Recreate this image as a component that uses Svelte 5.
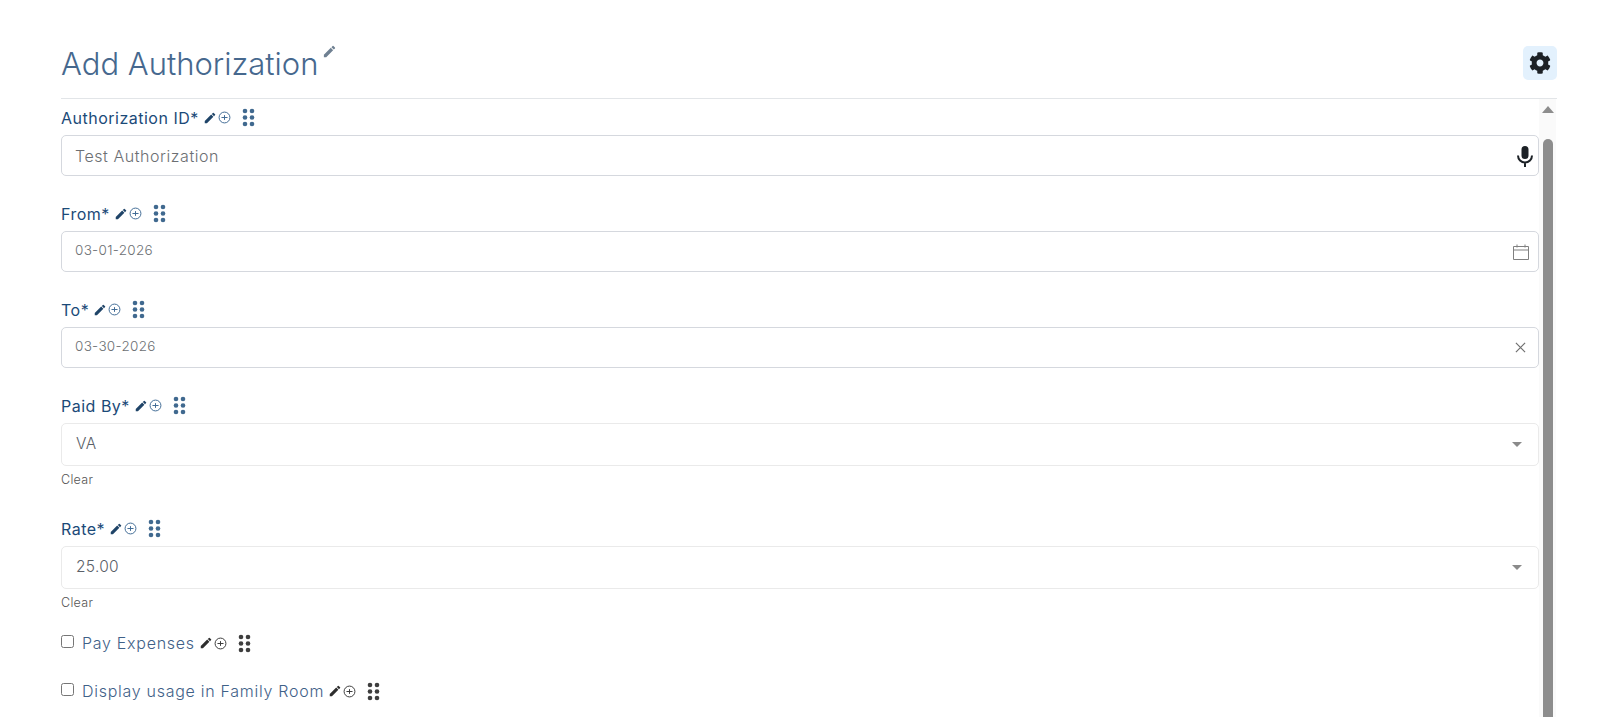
<script>
  const fields = [
    { label: 'Authorization ID*', value: 'Test Authorization', kind: 'text', icon: 'mic' },
    { label: 'From*', value: '03-01-2026', kind: 'date', icon: 'calendar' },
    { label: 'To*', value: '03-30-2026', kind: 'date', icon: 'close' },
    { label: 'Paid By*', value: 'VA', kind: 'select' },
    { label: 'Rate*', value: '25.00', kind: 'select' }
  ];
  const checks = ['Pay Expenses', 'Display usage in Family Room'];
</script>

{#snippet tools()}
  <svg class="pencil" viewBox="0 0 24 24"><path d="M3 17.25V21h3.75L17.81 9.94l-3.75-3.75L3 17.25zM20.71 7.04a1 1 0 0 0 0-1.41l-2.34-2.34a1 1 0 0 0-1.41 0l-1.83 1.83 3.75 3.75 1.83-1.83z" /></svg>
  <svg class="plus" viewBox="0 0 12 12"><circle cx="6" cy="6" r="5" /><path d="M3.2 6h5.6M6 3.8v4.4" /></svg>
  <svg class="grip" viewBox="0 0 13 19"><circle cx="3" cy="3" r="2.3" /><circle cx="10" cy="3" r="2.3" /><circle cx="3" cy="9.5" r="2.3" /><circle cx="10" cy="9.5" r="2.3" /><circle cx="3" cy="16" r="2.3" /><circle cx="10" cy="16" r="2.3" /></svg>
{/snippet}

<div class="page">
  <header class="head">
    <h1>Add Authorization</h1>
    <svg class="title-pencil" viewBox="0 0 24 24"><path d="M3 17.25V21h3.75L17.81 9.94l-3.75-3.75L3 17.25zM20.71 7.04a1 1 0 0 0 0-1.41l-2.34-2.34a1 1 0 0 0-1.41 0l-1.83 1.83 3.75 3.75 1.83-1.83z" /></svg>
    <button class="gear" type="button" aria-label="Settings">
      <svg viewBox="0 0 512 512"><path d="M487.4 315.7l-42.6-24.6c4.3-23.2 4.3-47 0-70.2l42.6-24.6c4.9-2.8 7.1-8.6 5.5-14-11.1-35.6-30-67.8-54.7-94.6-3.8-4.1-10-5.1-14.8-2.3L380.8 110c-17.9-15.4-38.5-27.3-60.8-35.1V25.8c0-5.6-3.9-10.5-9.4-11.7-36.7-8.2-74.3-7.8-109.2 0-5.5 1.2-9.4 6.1-9.4 11.7V75c-22.2 7.9-42.8 19.8-60.8 35.1L88.7 85.5c-4.9-2.8-11-1.9-14.8 2.3-24.7 26.7-43.6 58.9-54.7 94.6-1.7 5.4.6 11.2 5.5 14L67.3 221c-4.3 23.2-4.3 47 0 70.2l-42.6 24.6c-4.9 2.8-7.1 8.6-5.5 14 11.1 35.6 30 67.8 54.7 94.6 3.8 4.1 10 5.1 14.8 2.3l42.6-24.6c17.9 15.4 38.5 27.3 60.8 35.1v49.2c0 5.6 3.9 10.5 9.4 11.7 36.7 8.2 74.3 7.8 109.2 0 5.5-1.2 9.4-6.1 9.4-11.7v-49.2c22.2-7.9 42.8-19.8 60.8-35.1l42.6 24.6c4.9 2.8 11 1.9 14.8-2.3 24.7-26.7 43.6-58.9 54.7-94.6 1.5-5.5-.7-11.3-5.6-14.1zM256 336c-44.1 0-80-35.9-80-80s35.9-80 80-80 80 35.9 80 80-35.9 80-80 80z" /></svg>
    </button>
  </header>

  <div class="body">
    <form class="form">
      {#each fields as f}
        <div class="field" class:sel={f.kind === 'select'}>
          <div class="label"><span>{f.label}</span>{@render tools()}</div>
          <div class="control {f.kind}">
            <span class="value">{f.value}</span>
            {#if f.icon === 'mic'}
              <svg class="mic" viewBox="0 0 24 24"><path d="M12 15a3.5 3.5 0 0 0 3.5-3.5v-6a3.5 3.5 0 0 0-7 0v6A3.5 3.5 0 0 0 12 15z" /><path class="line" d="M5 11.5a7 7 0 0 0 14 0M12 18.5V23" /></svg>
            {:else if f.icon === 'calendar'}
              <svg class="cal" viewBox="0 0 16 16"><path d="M.5 2.5h15v13H.5zM.5 6h15M4 .5v3M12 .5v3" /></svg>
            {:else if f.icon === 'close'}
              <svg class="x" viewBox="0 0 12 12"><path d="M1 1l10 10M11 1 1 11" /></svg>
            {:else if f.kind === 'select'}
              <span class="caret"></span>
            {/if}
          </div>
          {#if f.kind === 'select'}<div class="clear">Clear</div>{/if}
        </div>
      {/each}

      {#each checks as c}
        <div class="check">
          <span class="box"></span>
          <span class="check-label">{c}</span>
          {@render tools()}
        </div>
      {/each}
    </form>

    <div class="scrollbar">
      <span class="up"></span>
      <span class="thumb"></span>
    </div>
  </div>
</div>

<style>
  :global(body) {
    margin: 0;
    background: #fff;
    overflow: hidden;
  }
  .page {
    height: 717px;
    overflow: hidden;
    box-sizing: border-box;
    padding: 46px 43px 0 61px;
    font-family: "Inter", "Noto Sans", sans-serif;
  }
  .head {
    display: flex;
    align-items: flex-start;
    height: 52px;
    border-bottom: 1px solid #e2e5e8;
  }
  h1 {
    margin: 0;
    font-size: 31px;
    line-height: 36px;
    font-weight: 300;
    color: #46688e;
  }
  .title-pencil {
    width: 15px;
    height: 15px;
    margin: -2px 0 0 4px;
    fill: #6f8092;
  }
  .gear {
    margin-left: auto;
    width: 34px;
    height: 34px;
    padding: 0;
    border: 0;
    border-radius: 5px;
    background: #e3f1fd;
    display: flex;
    align-items: center;
    justify-content: center;
  }
  .gear svg {
    width: 22px;
    height: 22px;
    fill: #1c2126;
  }
  .body {
    display: flex;
  }
  .form {
    width: 1478px;
    flex: none;
  }
  .field {
    height: 96px;
    padding-top: 7px;
    box-sizing: border-box;
  }
  .field.sel {
    height: 123px;
  }
  .label {
    display: flex;
    align-items: center;
    height: 23px;
    margin-bottom: 6px;
    font-size: 16px;
    letter-spacing: 0.5px;
    color: #1b4a78;
  }
  .pencil {
    width: 14px;
    height: 14px;
    margin-left: 4px;
    fill: #1f4468;
    flex: none;
  }
  .plus {
    width: 13px;
    height: 13px;
    margin-left: 1px;
    fill: none;
    stroke: #3f6a94;
    stroke-width: 0.9;
    flex: none;
  }
  .grip {
    width: 13px;
    height: 19px;
    margin-left: 11px;
    fill: #40698f;
    flex: none;
  }
  .control {
    height: 41px;
    box-sizing: border-box;
    border: 1px solid #d5d8de;
    border-radius: 5px;
    display: flex;
    align-items: center;
    justify-content: space-between;
    padding: 0 5px 0 13px;
    color: #6c6f73;
    font-weight: 300;
  }
  .control.text .value {
    font-size: 16px;
    letter-spacing: 0.55px;
  }
  .control.date .value {
    font-size: 13.5px;
    letter-spacing: 0.3px;
    padding-bottom: 4px;
  }
  .control.select {
    height: 43px;
    border-color: #eaeaea;
    padding: 0 16px 0 14px;
  }
  .control.select .value {
    font-size: 15.5px;
    letter-spacing: 0.3px;
    color: #5a6068;
    padding-bottom: 3px;
  }
  .mic {
    width: 24px;
    height: 24px;
    margin-right: -4px;
    fill: #1c2126;
  }
  .mic .line {
    fill: none;
    stroke: #1c2126;
    stroke-width: 2;
  }
  .cal {
    width: 16px;
    height: 16px;
    margin-right: 4px;
    fill: none;
    stroke: #808080;
  }
  .x {
    width: 11px;
    height: 11px;
    margin-right: 7px;
    fill: none;
    stroke: #6f6f6f;
    stroke-width: 1.3;
  }
  .caret {
    width: 0;
    height: 0;
    border-left: 5px solid transparent;
    border-right: 5px solid transparent;
    border-top: 5px solid #8a8a8a;
  }
  .clear {
    margin-top: 6px;
    font-size: 12.5px;
    letter-spacing: 0.3px;
    line-height: 15px;
    font-weight: 300;
    color: #555;
  }
  .check {
    display: flex;
    align-items: center;
    height: 48px;
    font-size: 16px;
    letter-spacing: 0.72px;
    font-weight: 300;
    color: #3f6188;
  }
  .field + .check {
    margin-top: -14px;
  }
  .box {
    width: 13px;
    height: 13px;
    box-sizing: border-box;
    border: 1px solid #767676;
    border-radius: 2.5px;
    margin-right: 8px;
    flex: none;
    position: relative;
    top: -2px;
  }
  .check .pencil {
    fill: #2d2d2d;
  }
  .check .plus {
    stroke: #3a3a3a;
  }
  .check .grip {
    fill: #3e3e3e;
  }
  .scrollbar {
    width: 17px;
    height: 620px;
    background: #fafafa;
    display: flex;
    flex-direction: column;
    align-items: center;
    padding-top: 7px;
    box-sizing: border-box;
  }
  .up {
    width: 0;
    height: 0;
    border-left: 6px solid transparent;
    border-right: 6px solid transparent;
    border-bottom: 7px solid #8d8d8d;
  }
  .thumb {
    width: 10px;
    flex: 1;
    margin-top: 26px;
    background: #8d8d8d;
    border-radius: 5px 5px 0 0;
  }
</style>
